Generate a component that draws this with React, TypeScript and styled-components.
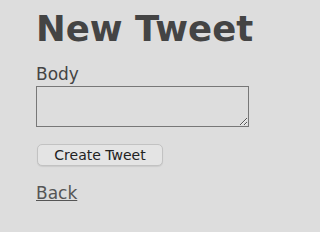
import React from 'react'
import styled, { createGlobalStyle } from 'styled-components'

const GlobalStyle = createGlobalStyle`
    html, body {
        margin: 0;
        padding: 0;
        background: #dddddd;
    }

    body {
        font-family: "DejaVu Sans", Verdana, sans-serif;
        color: #444444;
    }
`

const Page = styled.div`
    padding: 8px 36px;
`

const Title = styled.h1`
    margin: 0 0 15px;
    font-size: 35.5px;
    font-weight: bold;
    color: #444444;
`

const Field = styled.div`
    display: flex;
    flex-direction: column;
    align-items: flex-start;
`

const Label = styled.label`
    font-size: 17px;
    line-height: 20px;
    margin-bottom: 2px;
`

const TextArea = styled.textarea`
    box-sizing: border-box;
    width: 213px;
    height: 41px;
    margin: 0;
    padding: 2px;
    border: 1px solid #777777;
    background: #dddddd;
    font-family: inherit;
`

const Actions = styled.div`
    margin-top: 17px;
`

const SubmitButton = styled.button`
    width: 126px;
    height: 22px;
    margin-left: 1px;
    padding: 0;
    border: 1px solid #c2c2c2;
    border-radius: 5px;
    background: #e4e4e4;
    color: #222222;
    font-family: inherit;
    font-size: 14px;
    box-shadow: 0 1px 1px rgba(0, 0, 0, 0.08);
`

const BackLink = styled.a`
    display: inline-block;
    margin-top: 17px;
    font-size: 17px;
    color: #555555;
    text-decoration: underline;
`

export default function App() {
    return (
        <Page>
            <GlobalStyle />
            <Title>New Tweet</Title>
            <Field>
                <Label htmlFor="body">Body</Label>
                <TextArea id="body" />
            </Field>
            <Actions>
                <SubmitButton type="button">Create Tweet</SubmitButton>
            </Actions>
            <BackLink href="#">Back</BackLink>
        </Page>
    )
}
